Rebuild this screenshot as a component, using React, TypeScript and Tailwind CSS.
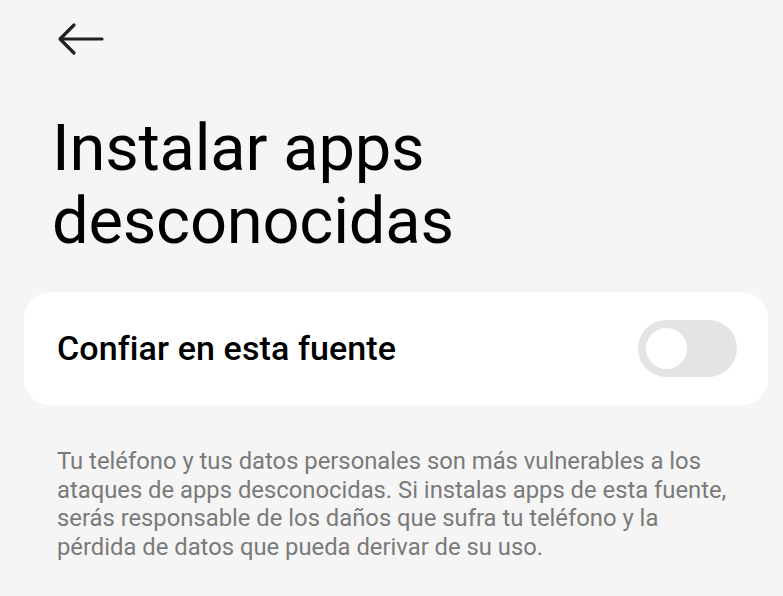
export default function App() {
  return (
    <div
      className="w-[783px] h-[596px] overflow-hidden bg-[#f5f5f5] text-black"
      style={{ fontFamily: 'Roboto, "Noto Sans", sans-serif' }}
    >
      {/* Back arrow */}
      <div className="pl-[56px] pt-[22px] h-[72px]">
        <svg width="48" height="34" viewBox="0 0 48 34" fill="none">
          <path
            d="M46 17H4M18 3L4 17l14 14"
            stroke="#222"
            strokeWidth="3.2"
            strokeLinecap="round"
            strokeLinejoin="round"
          />
        </svg>
      </div>

      {/* Title */}
      <h1 className="pl-[52px] pt-[40px] text-[65px] leading-[73px] font-normal tracking-[-0.2px]">
        Instalar apps
        <br />
        desconocidas
      </h1>

      {/* Card */}
      <div className="mx-[24px] mt-[34px] w-[744px] h-[113px] rounded-[26px] bg-white flex items-center justify-between pl-[33px] pr-[31px]">
        <span className="text-[34px] font-medium tracking-[0.1px]">Confiar en esta fuente</span>
        <div className="w-[99px] h-[57px] rounded-full bg-[#e4e4e4] flex items-center pl-[8px]">
          <div className="w-[41px] h-[41px] rounded-full bg-white" />
        </div>
      </div>

      {/* Description */}
      <p className="pl-[57px] pr-[20px] pt-[42px] text-[23.8px] leading-[28.5px] text-[#7a7a7a] whitespace-nowrap">
        Tu teléfono y tus datos personales son más vulnerables a los
        <br />
        ataques de apps desconocidas. Si instalas apps de esta fuente,
        <br />
        serás responsable de los daños que sufra tu teléfono y la
        <br />
        pérdida de datos que pueda derivar de su uso.
      </p>
    </div>
  );
}
